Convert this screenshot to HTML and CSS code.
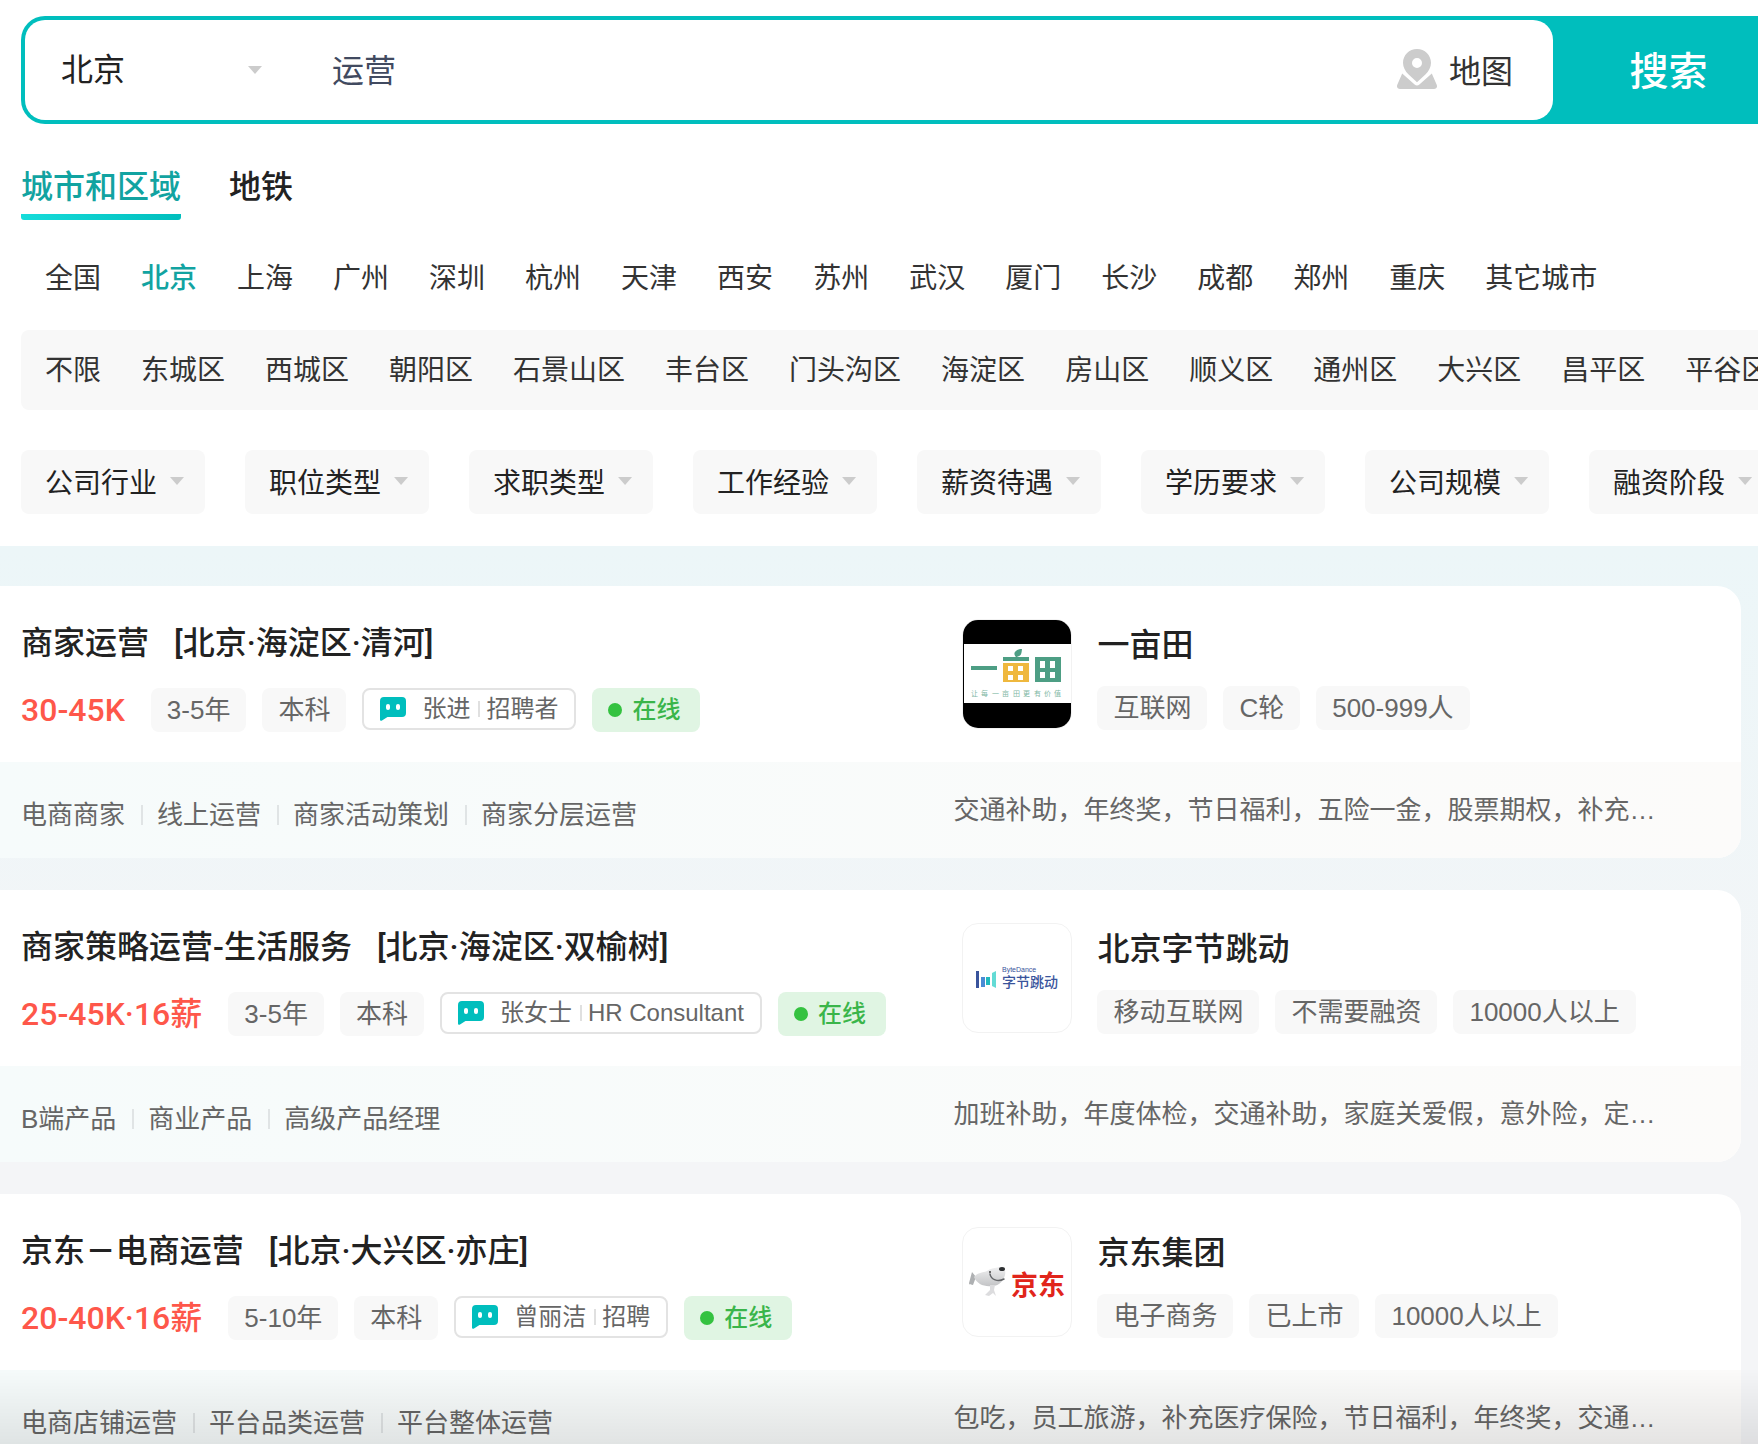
FILE: index.html
```html
<!DOCTYPE html>
<html lang="zh-CN">
<head>
<meta charset="utf-8">
<meta name="viewport" content="width=device-width, initial-scale=1">
<title>北京运营招聘</title>
<link rel="stylesheet" href="styles.css">
</head>
<body>
<svg class="sprite" aria-hidden="true">
  <symbol id="icon-chat" viewBox="0 0 26 24">
    <path fill="#00bebd" d="M4 0h18a4 4 0 0 1 4 4v12a4 4 0 0 1-4 4H7.500L2 23.600C1 24.200 0 23.700 0 22.600V4a4 4 0 0 1 4-4z"/>
    <rect x="6" y="7" width="4" height="6" rx="2" fill="#fff"/>
    <rect x="16" y="7" width="4" height="6" rx="2" fill="#fff"/>
  </symbol>
</svg>

<header class="filters-panel">
  <form class="search">
    <div class="search-field">
      <select class="search-city" aria-label="城市"><option>北京</option></select>
      <input class="search-input" type="text" value="运营" aria-label="搜索职位">
      <a class="search-map" href="#map">
        <svg class="map-icon" viewBox="0 0 40 40" aria-hidden="true">
          <path fill="#ccc" fill-rule="evenodd" d="M20 0c7.800 0 14 6.200 14 13.800 0 4.600-2.200 8.400-5.600 11.700L20 33.300l-8.400-7.800C8.200 22.200 6 18.400 6 13.800 6 6.200 12.200 0 20 0zm0 9a5 5 0 1 0 0 10 5 5 0 0 0 0-10z"/>
          <path fill="#ccc" d="M5.200 24.500 17.600 35.400a3.600 3.600 0 0 0 4.800 0L34.800 24.500 39.600 35.500C40.700 38 39.500 40 37 40H3C.5 40-.7 38 .4 35.500z"/>
        </svg>
        地图
      </a>
    </div>
    <button class="search-button" type="submit">搜索</button>
  </form>

  <div class="tabs">
    <button class="tab tab-active" type="button">城市和区域</button>
    <button class="tab" type="button">地铁</button>
  </div>

  <nav class="places" aria-label="城市">
    <a href="#">全国</a><a class="current" href="#">北京</a><a href="#">上海</a><a href="#">广州</a><a href="#">深圳</a><a href="#">杭州</a><a href="#">天津</a><a href="#">西安</a><a href="#">苏州</a><a href="#">武汉</a><a href="#">厦门</a><a href="#">长沙</a><a href="#">成都</a><a href="#">郑州</a><a href="#">重庆</a><a href="#">其它城市</a>
  </nav>

  <nav class="places districts" aria-label="区域">
    <a href="#">不限</a><a href="#">东城区</a><a href="#">西城区</a><a href="#">朝阳区</a><a href="#">石景山区</a><a href="#">丰台区</a><a href="#">门头沟区</a><a href="#">海淀区</a><a href="#">房山区</a><a href="#">顺义区</a><a href="#">通州区</a><a href="#">大兴区</a><a href="#">昌平区</a><a href="#">平谷区</a>
  </nav>

  <div class="conditions">
    <button class="condition" type="button">公司行业</button>
    <button class="condition" type="button">职位类型</button>
    <button class="condition" type="button">求职类型</button>
    <button class="condition" type="button">工作经验</button>
    <button class="condition" type="button">薪资待遇</button>
    <button class="condition" type="button">学历要求</button>
    <button class="condition" type="button">公司规模</button>
    <button class="condition" type="button">融资阶段</button>
  </div>
</header>

<main class="results">
  <article class="job">
    <div class="job-main">
      <h2 class="job-title"><a href="#">商家运营</a><span>[北京·海淀区·清河]</span></h2>
      <div class="tag-row">
        <span class="salary">30-45K</span>
        <span class="tag">3-5年</span>
        <span class="tag">本科</span>
        <a class="recruiter" href="#"><svg class="chat-icon" aria-hidden="true"><use href="#icon-chat"/></svg><span>张进</span><span class="recruiter-role">招聘者</span></a>
        <span class="online">在线</span>
      </div>
    </div>
    <div class="company">
      <svg class="company-logo" viewBox="0 0 108 108" role="img" aria-label="一亩田">
        <rect width="108" height="108" fill="#000"/>
        <rect x="1" y="24" width="107" height="59" fill="#fff"/>
        <rect x="8" y="46" width="26" height="4" fill="#4d9e84"/>
        <rect x="40" y="37" width="26" height="4" fill="#4d9e84"/>
        <path fill="#4d9e84" d="M53 37c-4-4 0-8 6-8-.5 5-1 7-4.500 7.500L54 38z"/>
        <path fill="#efb83e" fill-rule="evenodd" d="M40 43h26v19H40zM45 46v5h5v-5zm10 0v5h5v-5zM45 55v5h5v-5zm10 0v5h5v-5z"/>
        <path fill="#4d9e84" fill-rule="evenodd" d="M72 37h26v25H72zM77 41v7h5v-7zm10 0v7h5v-7zM77 52v6h5v-6zm10 0v6h5v-6z"/>
        <text class="logo-slogan" y="76" x="8 18 29 39 50 60 71 81 91">让每一亩田更有价值</text>
      </svg>
      <div class="company-body">
        <h3 class="company-name"><a href="#">一亩田</a></h3>
        <div class="tag-row"><span class="tag">互联网</span><span class="tag">C轮</span><span class="tag">500-999人</span></div>
      </div>
    </div>
    <footer class="job-footer">
      <ul class="skills"><li>电商商家</li><li>线上运营</li><li>商家活动策划</li><li>商家分层运营</li></ul>
      <p class="benefits">交通补助，年终奖，节日福利，五险一金，股票期权，补充…</p>
    </footer>
  </article>

  <article class="job">
    <div class="job-main">
      <h2 class="job-title"><a href="#">商家策略运营-生活服务</a><span>[北京·海淀区·双榆树]</span></h2>
      <div class="tag-row">
        <span class="salary">25-45K·16薪</span>
        <span class="tag">3-5年</span>
        <span class="tag">本科</span>
        <a class="recruiter" href="#"><svg class="chat-icon" aria-hidden="true"><use href="#icon-chat"/></svg><span>张女士</span><span class="recruiter-role">HR Consultant</span></a>
        <span class="online">在线</span>
      </div>
    </div>
    <div class="company">
      <svg class="company-logo" viewBox="0 0 108 108" role="img" aria-label="北京字节跳动">
        <rect x="13" y="47" width="3" height="17" fill="#39549c"/>
        <rect x="18" y="53" width="4" height="10" fill="#4a8bd4"/>
        <rect x="23" y="53" width="4" height="8" fill="#20b9bd"/>
        <path fill="#63dbd5" d="M29 49l4-2v17l-4-2z"/>
        <text class="logo-bytedance-en" x="39" y="48">ByteDance</text>
        <text class="logo-bytedance" x="39" y="63">字节跳动</text>
      </svg>
      <div class="company-body">
        <h3 class="company-name"><a href="#">北京字节跳动</a></h3>
        <div class="tag-row"><span class="tag">移动互联网</span><span class="tag">不需要融资</span><span class="tag">10000人以上</span></div>
      </div>
    </div>
    <footer class="job-footer">
      <ul class="skills"><li>B端产品</li><li>商业产品</li><li>高级产品经理</li></ul>
      <p class="benefits">加班补助，年度体检，交通补助，家庭关爱假，意外险，定…</p>
    </footer>
  </article>

  <article class="job">
    <div class="job-main">
      <h2 class="job-title"><a href="#">京东<span class="dash">—</span>电商运营</a><span>[北京·大兴区·亦庄]</span></h2>
      <div class="tag-row">
        <span class="salary">20-40K·16薪</span>
        <span class="tag">5-10年</span>
        <span class="tag">本科</span>
        <a class="recruiter" href="#"><svg class="chat-icon" aria-hidden="true"><use href="#icon-chat"/></svg><span>曾丽洁</span><span class="recruiter-role">招聘</span></a>
        <span class="online">在线</span>
      </div>
    </div>
    <div class="company">
      <svg class="company-logo" viewBox="0 0 108 108" role="img" aria-label="京东集团">
        <defs>
          <linearGradient id="dog" x1="0" y1="0" x2="0" y2="1"><stop offset="0" stop-color="#f0f0f1"/><stop offset="1" stop-color="#c3c4c6"/></linearGradient>
        </defs>
        <path fill="#aeb0b2" d="M9 44l4 5-3 8c-3-1-4 0-4-2z"/>
        <path fill="url(#dog)" d="M11 49c4-5 8-4 13-6 4-3 8-3 13-4 4 0 6 3 5 8-2 8-8 11-13 11-8 1-15-2-18-9z"/>
        <path fill="#dcdcde" d="M27 57h5l-1 5 2 6-3-3-4 3-4-1 5-5z"/>
        <ellipse cx="39" cy="41" rx="3" ry="2" fill="#2d2f31"/>
        <circle cx="27" cy="44" r="1" fill="#444"/>
        <path fill="none" stroke="#636568" stroke-width="1.500" stroke-linecap="round" d="M27 46c1 6 8 8 14 5"/>
        <text class="logo-jd" x="48" y="67">京东</text>
      </svg>
      <div class="company-body">
        <h3 class="company-name"><a href="#">京东集团</a></h3>
        <div class="tag-row"><span class="tag">电子商务</span><span class="tag">已上市</span><span class="tag">10000人以上</span></div>
      </div>
    </div>
    <footer class="job-footer">
      <ul class="skills"><li>电商店铺运营</li><li>平台品类运营</li><li>平台整体运营</li></ul>
      <p class="benefits">包吃，员工旅游，补充医疗保险，节日福利，年终奖，交通…</p>
    </footer>
  </article>
</main>
<div class="bottom-shade"></div>
</body>
</html>
```
FILE: styles.css
```css
* {
  box-sizing: border-box;
}

body {
  display: flex;
  flex-direction: column;
  height: 100vh;
  margin: 0;
  overflow: hidden;
  background: #f4f5f7;
  color: #222;
  font-family: "Liberation Sans", "Noto Sans CJK SC", sans-serif;
  font-size: 26px;
}

a {
  color: inherit;
  text-decoration: none;
}

button,
input,
select {
  margin: 0;
  padding: 0;
  border: 0;
  background: none;
  color: inherit;
  font: inherit;
}

h2,
h3,
p,
ul {
  margin: 0;
  padding: 0;
}

.sprite {
  position: absolute;
  width: 0;
  height: 0;
}

/* Search and filters */

.filters-panel {
  flex: none;
  overflow: hidden;
  padding: 16px 0 32px 21px;
  background: #fff;
}

.search {
  display: flex;
  height: 108px;
  padding: 4px 0 4px 4px;
  border-radius: 24px 0 0 24px;
  background: #00bebd;
}

.search-field {
  display: flex;
  flex: 1;
  align-items: center;
  min-width: 0;
  padding: 0 40px 0 36px;
  border-radius: 20px;
  background: #fff;
  font-size: 32px;
}

.search-city {
  flex: none;
  width: 201px;
  height: 100%;
  appearance: none;
  background: url("data:image/svg+xml,%3Csvg xmlns='http://www.w3.org/2000/svg' width='14' height='8'%3E%3Cpath d='M0 0h14L7 8z' fill='%23ccc'/%3E%3C/svg%3E") no-repeat right center;
}

.search-input {
  flex: 1;
  min-width: 0;
  height: 100%;
  padding: 0 0 4px 70px;
  color: #414a60;
  outline: 0;
}

.search-map {
  display: flex;
  flex: none;
  align-items: center;
  gap: 12px;
  padding-bottom: 3px;
  color: #333;
}

.map-icon {
  width: 40px;
  height: 40px;
}

.search-button {
  flex: none;
  width: 205px;
  padding: 0 0 4px 26px;
  color: #fff;
  font-size: 39px;
  font-weight: 500;
}

.tabs {
  display: flex;
  gap: 48px;
  margin-top: 40px;
}

.tab {
  height: 56px;
  padding-bottom: 10px;
  font-size: 32px;
  font-weight: 500;
  line-height: 46px;
}

.tab-active {
  background: linear-gradient(90deg, #16dcda, #00bebd) no-repeat bottom / 100% 6px;
  border-radius: 3px;
  color: #12a3a1;
}

.places {
  display: flex;
  gap: 40px;
  margin-top: 37px;
  padding-left: 24px;
  color: #333;
  font-size: 28px;
  line-height: 44px;
  white-space: nowrap;
}

.places .current {
  color: #12a3a1;
  font-weight: 500;
}

.districts {
  margin-top: 29px;
  padding-top: 19px;
  padding-bottom: 17px;
  border-radius: 8px 0 0 8px;
  background: #f8f8f8;
}

.conditions {
  display: flex;
  gap: 40px;
  margin-top: 40px;
}

.condition {
  display: flex;
  flex: none;
  align-items: center;
  gap: 13px;
  height: 64px;
  padding: 0 21px 2px 24px;
  border-radius: 8px;
  background: #f8f8f8;
  font-size: 28px;
}

.condition::after {
  content: "";
  width: 14px;
  height: 8px;
  background: #ccc;
  clip-path: polygon(0 0, 100% 0, 50% 100%);
}

/* Result list */

.results {
  display: flex;
  flex: 1;
  flex-direction: column;
  gap: 32px;
  min-height: 0;
  overflow-y: auto;
  padding: 40px 17px 40px 0;
  background: linear-gradient(#ecf6f8, #f4f5f7 560px);
  scrollbar-width: none;
}

.job {
  display: grid;
  flex: none;
  grid-template-columns: 23fr 19fr;
  overflow: hidden;
  border-radius: 0 24px 24px 0;
  background: #fff;
}

.job-main {
  min-width: 0;
  height: 176px;
  padding: 33px 0 0 21px;
}

.job-title,
.company-name {
  font-family: Roboto, "Noto Sans CJK SC", sans-serif;
  font-size: 32px;
  font-weight: 500;
  line-height: 48px;
  white-space: nowrap;
}

.job-title {
  display: flex;
  gap: 25px;
  margin-bottom: 21px;
}

.dash {
  margin: 0 3px;
}

.tag-row {
  display: flex;
  gap: 16px;
  height: 44px;
  line-height: 44px;
  white-space: nowrap;
}

.salary {
  margin-right: 10px;
  color: #fe574a;
  font-family: Roboto, "Noto Sans CJK SC", sans-serif;
  font-size: 32px;
  font-weight: 500;
}

.tag {
  padding: 0 16px;
  border-radius: 8px;
  background: #f8f8f8;
  color: #666;
}

.recruiter {
  display: flex;
  align-items: center;
  height: 42px;
  padding: 0 16px;
  border: 2px solid #e3e3e3;
  border-radius: 8px;
  color: #666;
  font-size: 24px;
}

.chat-icon {
  width: 26px;
  height: 24px;
  margin-right: 16px;
}

.recruiter-role {
  display: flex;
  align-items: center;
}

.recruiter-role::before {
  content: "";
  width: 2px;
  height: 16px;
  margin: 0 6px 0 8px;
  background: #e0e0e0;
}

.online {
  display: flex;
  align-items: center;
  gap: 10px;
  padding: 0 20px 0 16px;
  border-radius: 8px;
  background: #e0f5e3;
  color: #3ab54a;
  font-size: 24px;
  font-weight: 500;
}

.online::before {
  content: "";
  width: 14px;
  height: 14px;
  border-radius: 50%;
  background: #34c240;
}

.company {
  display: flex;
  gap: 25px;
  min-width: 0;
  padding: 33px 0 0 9px;
}

.company-logo {
  flex: none;
  width: 110px;
  height: 110px;
  border: 1px solid #f2f2f2;
  border-radius: 16px;
}

.company-body {
  padding-top: 2px;
}

.company-name {
  margin-bottom: 17px;
}

.logo-slogan {
  fill: #7fb8a5;
  font-size: 7px;
}

.logo-bytedance-en {
  fill: #39549c;
  font-size: 7px;
  font-weight: 500;
}

.logo-bytedance {
  fill: #39549c;
  font-size: 14px;
  font-weight: 500;
}

.logo-jd {
  fill: #e1251b;
  font-size: 27px;
  font-weight: 700;
}

.job-footer {
  display: grid;
  grid-column: 1 / -1;
  grid-template-columns: subgrid;
  height: 96px;
  background: linear-gradient(90deg, #f6fbfb, #fcfbfa);
  color: #666;
  line-height: 40px;
  white-space: nowrap;
}

.skills {
  display: flex;
  align-items: center;
  padding: 9px 0 0 21px;
  list-style: none;
}

.skills li {
  display: flex;
  align-items: center;
}

.skills li + li::before {
  content: "";
  width: 2px;
  height: 20px;
  margin: 0 14px 0 16px;
  background: #e0e4e5;
}

.benefits {
  align-self: center;
  overflow: hidden;
  text-overflow: ellipsis;
}

/* Fade over the list at the window's lower edge */

.bottom-shade {
  position: fixed;
  right: 0;
  bottom: 0;
  left: 0;
  height: 76px;
  background: linear-gradient(transparent, rgba(0, 0, 0, 0.09));
  pointer-events: none;
}
```
